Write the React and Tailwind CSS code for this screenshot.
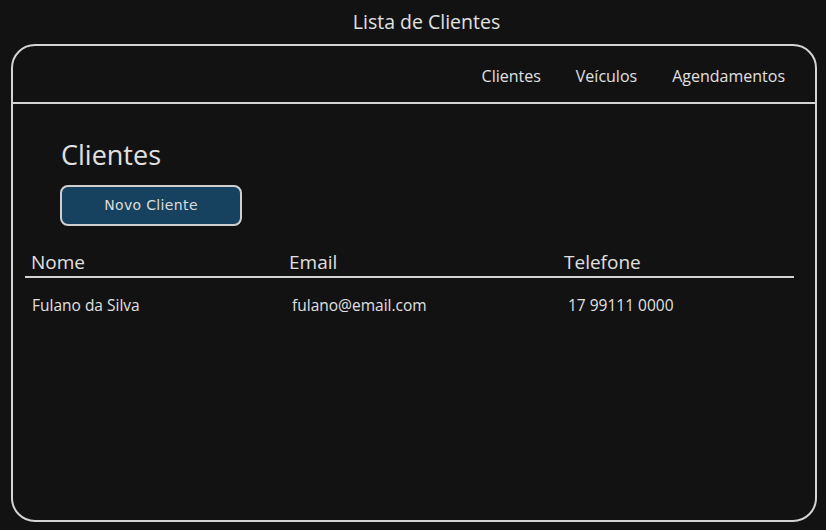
import React from 'react';

const clientes = [
    { nome: 'Fulano da Silva', email: 'fulano@email.com', telefone: '17 99111 0000' },
];

const App = () => {
    return (
        <div className="w-[826px] h-[530px] bg-[#121212] text-[#e0e0e0] font-['Open_Sans','Noto_Sans',sans-serif] overflow-hidden">
            <div className="h-[44px] flex items-center justify-center pl-[27px] text-[19.5px]">
                Lista de Clientes
            </div>

            <div className="ml-[11px] mr-[9px] h-[478px] border-2 border-[#d4d4d4] rounded-[24px]">
                {/* Navegação */}
                <nav className="h-[58px] flex items-center justify-end gap-[35px] pr-[32px] pt-[4px] border-b-2 border-[#d4d4d4] -mx-[2px] text-[16px]">
                    <a>Clientes</a>
                    <a>Veículos</a>
                    <a>Agendamentos</a>
                </nav>

                <div className="pt-[34px]">
                    <h1 className="pl-[48px] text-[27px] leading-[34px]">Clientes</h1>
                    <div className="pl-[47px] mt-[13px]">
                        <button className="w-[182px] h-[41px] bg-[#17425f] border-2 border-[#cfcfcf] rounded-[8px] text-[14px] tracking-wide font-['DejaVu_Sans',cursive] text-[#dcdcdc]">
                            Novo Cliente
                        </button>
                    </div>

                    <div className="mx-[12px] mt-[22px] w-[769px]">
                        <div className="grid grid-cols-[258px_275px_1fr] text-[19px] leading-[26px] pl-[6px] pt-[1px] border-b-2 border-[#d4d4d4] pb-[1px]">
                            <span>Nome</span>
                            <span>Email</span>
                            <span>Telefone</span>
                        </div>
                        {clientes.map((c, idx) => (
                            <div key={idx} className="grid grid-cols-[260px_276px_1fr] text-[15.5px] leading-[20px] pl-[7px] pt-[17px]">
                                <span>{c.nome}</span>
                                <span>{c.email}</span>
                                <span>{c.telefone}</span>
                            </div>
                        ))}
                    </div>
                </div>
            </div>
        </div>
    );
};

export default App;
